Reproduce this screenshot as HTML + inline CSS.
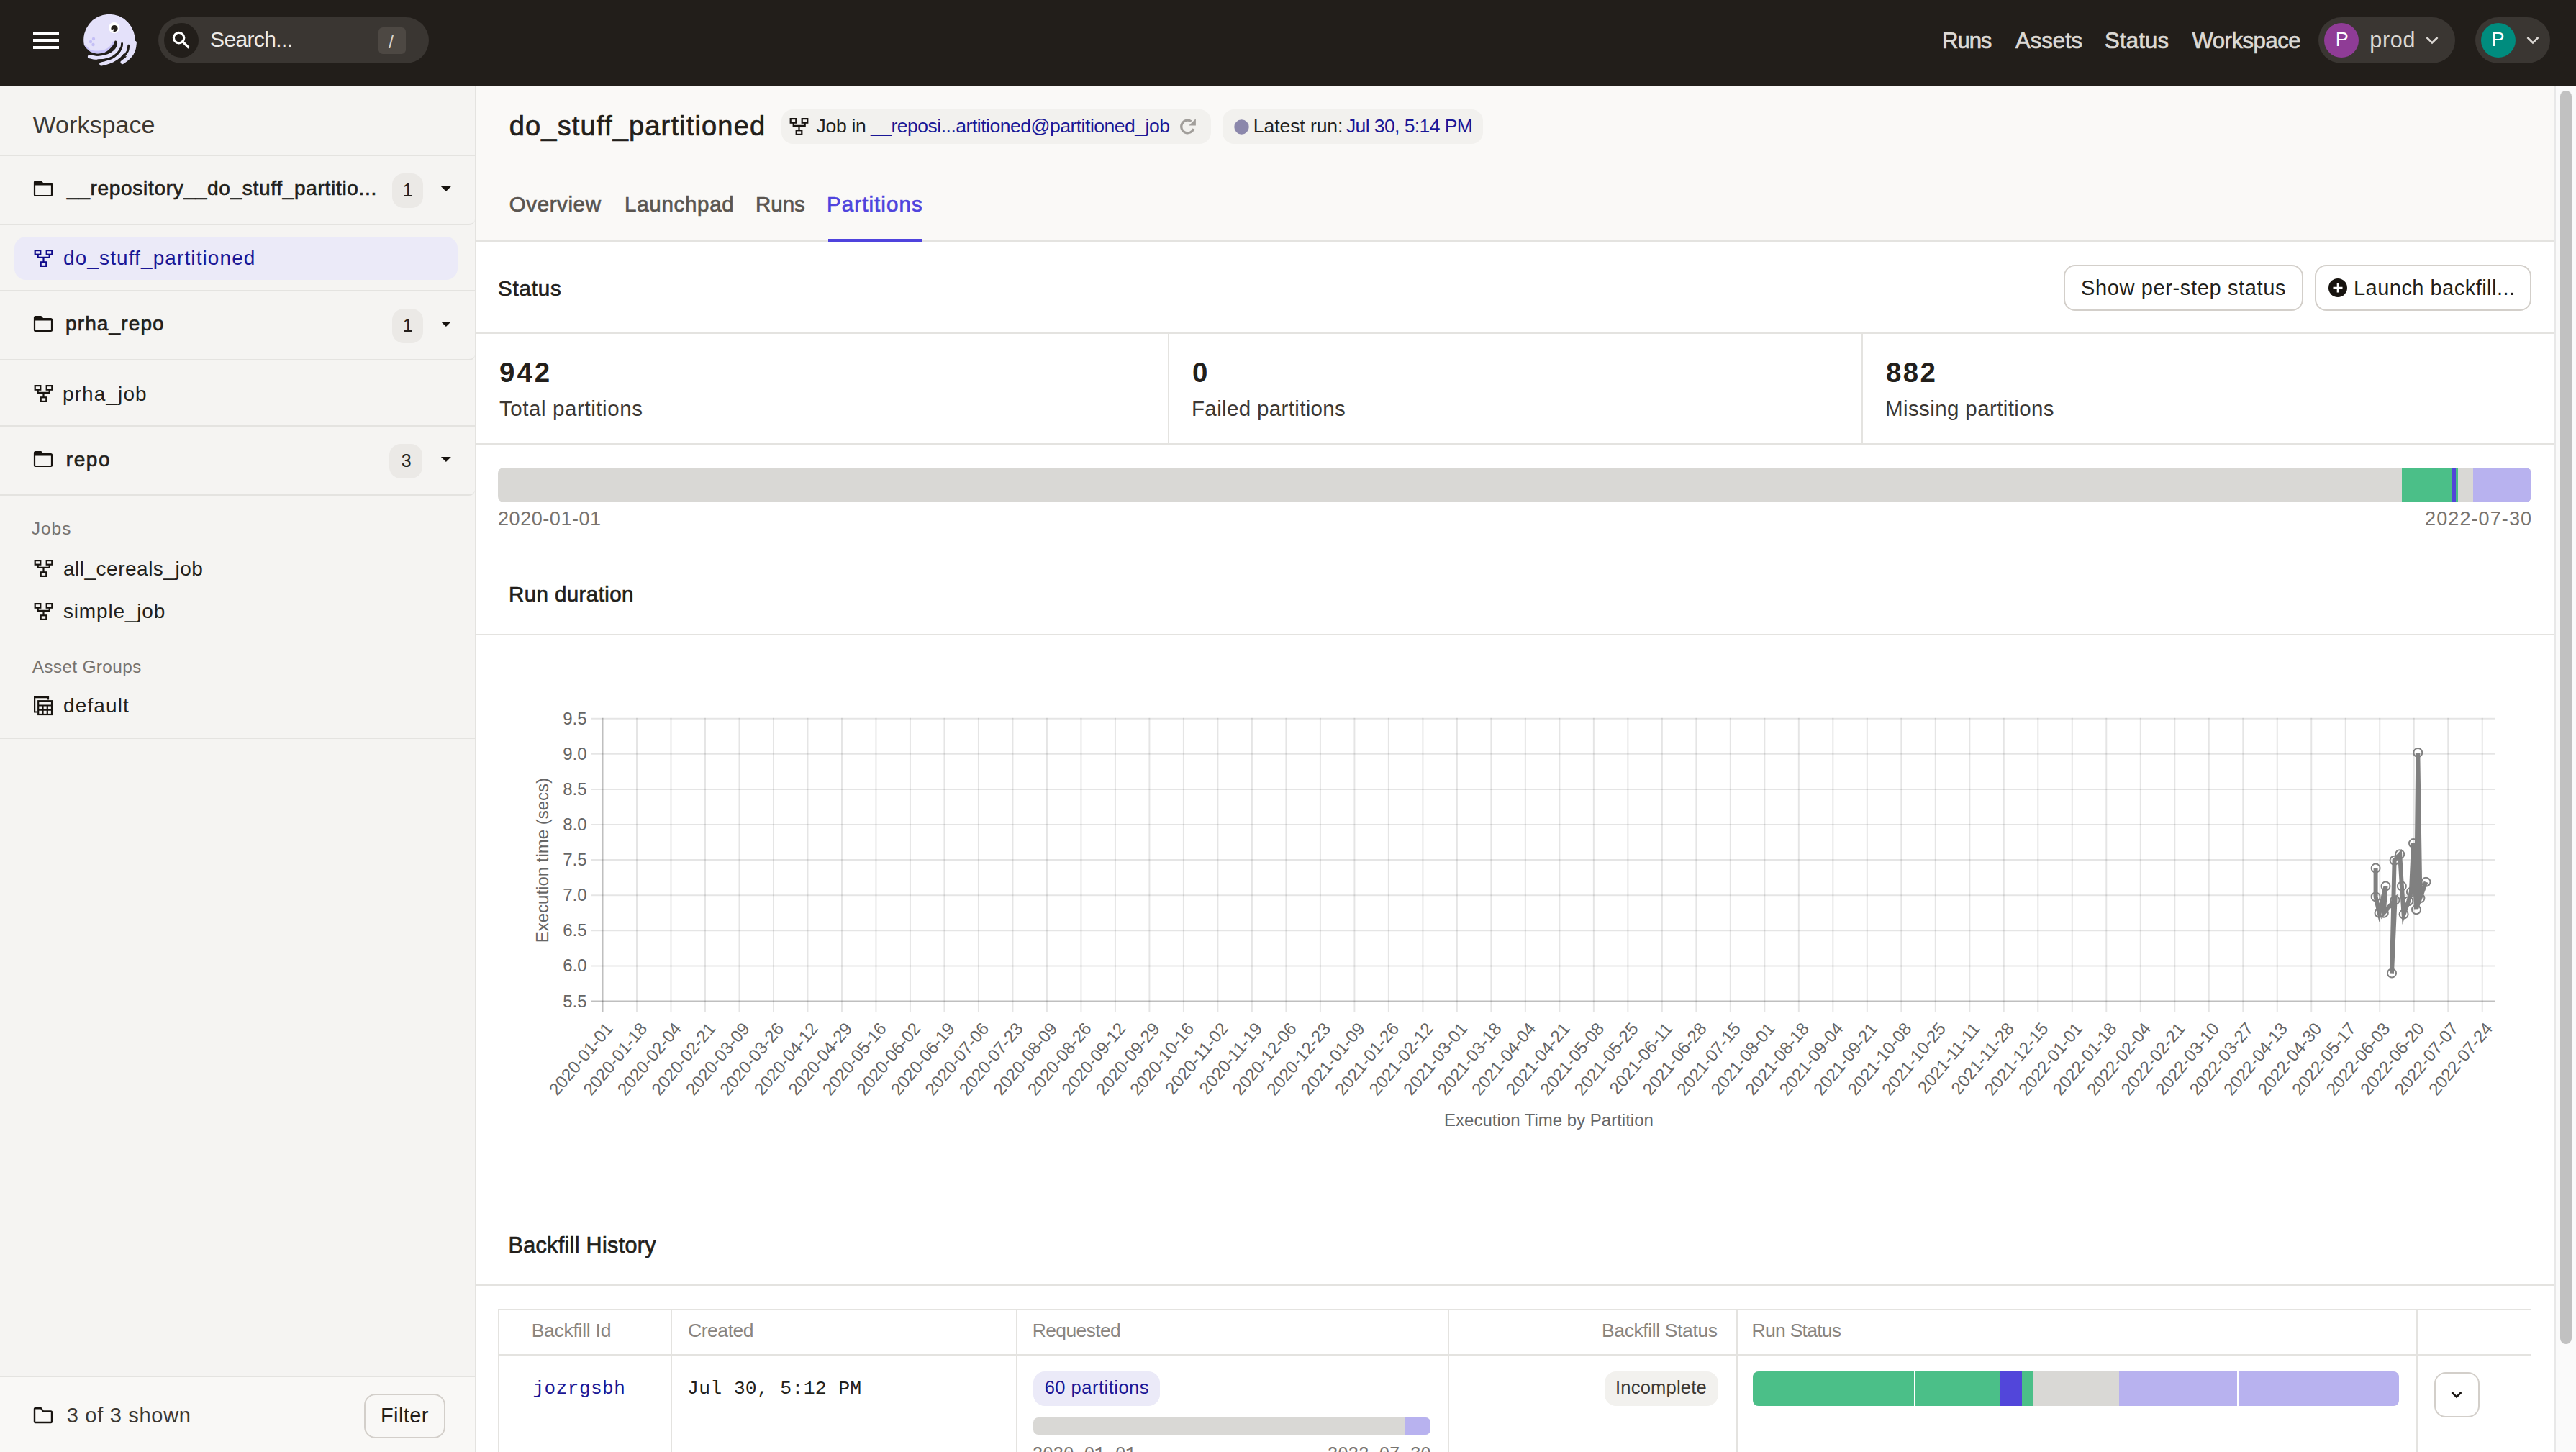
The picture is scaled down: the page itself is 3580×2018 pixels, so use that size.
<!DOCTYPE html><html><head><meta charset="utf-8"><style>
html,body{margin:0;padding:0;width:3580px;height:2018px;overflow:hidden;background:#fff;}
.r,.t,.s{position:absolute;}
.t{white-space:nowrap;}
</style></head><body>
<div class="r" style="left:0px;top:0px;width:3580px;height:120px;background:#221E1A;border-radius:0px;"></div>
<div class="r" style="left:46px;top:44px;width:36px;height:4px;background:#FFFFFF;border-radius:0px;"></div>
<div class="r" style="left:46px;top:54px;width:36px;height:4px;background:#FFFFFF;border-radius:0px;"></div>
<div class="r" style="left:46px;top:64px;width:36px;height:4px;background:#FFFFFF;border-radius:0px;"></div>
<div class="r" style="left:220px;top:24px;width:376px;height:64px;background:#3A3632;border-radius:32px;"></div>
<div class="r" style="left:228px;top:32px;width:48px;height:48px;background:#221E1A;border-radius:24px;"></div>
<div class="r" style="left:526px;top:38px;width:38px;height:37px;background:#4D4843;border-radius:6px;"></div>
<div class="r" style="left:3222px;top:24px;width:190px;height:64px;background:#3A3632;border-radius:32px;"></div>
<div class="r" style="left:3230px;top:32px;width:48px;height:48px;background:#8F3C96;border-radius:24px;"></div>
<div class="r" style="left:3440px;top:24px;width:104px;height:64px;background:#3A3632;border-radius:32px;"></div>
<div class="r" style="left:3448px;top:32px;width:48px;height:48px;background:#008C7E;border-radius:24px;"></div>
<div class="r" style="left:0px;top:120px;width:660px;height:1898px;background:#F5F4F2;border-radius:0px;"></div>
<div class="r" style="left:660px;top:120px;width:2px;height:1898px;background:#E4E3E0;border-radius:0px;"></div>
<div class="r" style="left:0px;top:215px;width:660px;height:2px;background:#E4E3E0;border-radius:0px;"></div>
<div class="r" style="left:545px;top:241px;width:43px;height:48px;background:#EBE9E6;border-radius:16px;"></div>
<div class="r" style="left:0px;top:216px;width:660px;height:97px;background:transparent;border-radius:0px;border-bottom:2px solid #E4E3E0;border-bottom-right-radius:8px;box-sizing:border-box"></div>
<div class="r" style="left:20px;top:329px;width:616px;height:60px;background:#EBEAF8;border-radius:16px;"></div>
<div class="r" style="left:0px;top:403px;width:660px;height:2px;background:#E4E3E0;border-radius:0px;"></div>
<div class="r" style="left:545px;top:429px;width:43px;height:48px;background:#EBE9E6;border-radius:16px;"></div>
<div class="r" style="left:0px;top:404px;width:660px;height:97px;background:transparent;border-radius:0px;border-bottom:2px solid #E4E3E0;border-bottom-right-radius:8px;box-sizing:border-box"></div>
<div class="r" style="left:0px;top:591px;width:660px;height:2px;background:#E4E3E0;border-radius:0px;"></div>
<div class="r" style="left:541px;top:617px;width:46px;height:48px;background:#EBE9E6;border-radius:16px;"></div>
<div class="r" style="left:0px;top:592px;width:660px;height:96.5px;background:transparent;border-radius:0px;border-bottom:2px solid #E4E3E0;border-bottom-right-radius:8px;box-sizing:border-box"></div>
<div class="r" style="left:0px;top:1025px;width:660px;height:2px;background:#E4E3E0;border-radius:0px;"></div>
<div class="r" style="left:0px;top:1912px;width:660px;height:106px;background:#F9F8F6;border-radius:0px;"></div>
<div class="r" style="left:0px;top:1912px;width:660px;height:2px;background:#E4E3E0;border-radius:0px;"></div>
<div class="r" style="left:506px;top:1937px;width:113px;height:62px;background:transparent;border-radius:16px;border:2px solid #D3CFCA;box-sizing:border-box"></div>
<div class="r" style="left:662px;top:120px;width:2888px;height:214px;background:#FAF9F7;border-radius:0px;"></div>
<div class="r" style="left:662px;top:333.5px;width:2888px;height:2px;background:#E4E3E0;border-radius:0px;"></div>
<div class="r" style="left:1086px;top:152px;width:597px;height:48px;background:#F2F1EE;border-radius:16px;"></div>
<div class="r" style="left:1699px;top:152px;width:362px;height:48px;background:#F2F1EE;border-radius:16px;"></div>
<div class="r" style="left:1151px;top:331.5px;width:131px;height:4px;background:#4F43DD;border-radius:0px;"></div>
<div class="r" style="left:662px;top:335.5px;width:2888px;height:1682.5px;background:#FFFFFF;border-radius:0px;"></div>
<div class="r" style="left:2868px;top:368px;width:333px;height:64px;background:transparent;border-radius:16px;border:2px solid #D3CFCA;box-sizing:border-box"></div>
<div class="r" style="left:3217px;top:368px;width:301px;height:64px;background:transparent;border-radius:16px;border:2px solid #D3CFCA;box-sizing:border-box"></div>
<div class="r" style="left:662px;top:462px;width:2888px;height:2px;background:#E4E3E0;border-radius:0px;"></div>
<div class="r" style="left:1623px;top:463px;width:2px;height:154px;background:#E4E3E0;border-radius:0px;"></div>
<div class="r" style="left:2587px;top:463px;width:2px;height:154px;background:#E4E3E0;border-radius:0px;"></div>
<div class="r" style="left:662px;top:616px;width:2888px;height:2px;background:#E4E3E0;border-radius:0px;"></div>
<div class="r" style="left:662px;top:881px;width:2888px;height:2px;background:#E4E3E0;border-radius:0px;"></div>
<div class="r" style="left:662px;top:1784.5px;width:2888px;height:2px;background:#E4E3E0;border-radius:0px;"></div>
<div class="r" style="left:692px;top:1819px;width:2826px;height:2px;background:#E4E3E0;border-radius:0px;"></div>
<div class="r" style="left:692px;top:1819px;width:2px;height:199px;background:#E4E3E0;border-radius:0px;"></div>
<div class="r" style="left:692px;top:1882px;width:2826px;height:2px;background:#E4E3E0;border-radius:0px;"></div>
<div class="r" style="left:932px;top:1819px;width:2px;height:199px;background:#E4E3E0;border-radius:0px;"></div>
<div class="r" style="left:1412px;top:1819px;width:2px;height:199px;background:#E4E3E0;border-radius:0px;"></div>
<div class="r" style="left:2012px;top:1819px;width:2px;height:199px;background:#E4E3E0;border-radius:0px;"></div>
<div class="r" style="left:2412.5px;top:1819px;width:2px;height:199px;background:#E4E3E0;border-radius:0px;"></div>
<div class="r" style="left:3358px;top:1819px;width:2px;height:199px;background:#E4E3E0;border-radius:0px;"></div>
<div class="r" style="left:1436px;top:1906px;width:175.5px;height:48px;background:#EBEAF8;border-radius:16px;"></div>
<div class="r" style="left:2230px;top:1906px;width:157.5px;height:48px;background:#F2F1EE;border-radius:16px;"></div>
<div class="r" style="left:3382.6px;top:1906.7px;width:63px;height:63px;background:transparent;border-radius:16px;border:2px solid #D3CFCA;box-sizing:border-box"></div>
<div class="r" style="left:3550px;top:120px;width:30px;height:1898px;background:#FAFAFA;border-radius:0px;"></div>
<div class="r" style="left:3550px;top:120px;width:1.5px;height:1898px;background:#E8E8E8;border-radius:0px;"></div>
<div class="r" style="left:3558px;top:126px;width:16px;height:1742px;background:#C1C1C1;border-radius:8px;"></div>
<svg class="s" style="left:228px;top:32px" width="48" height="48"><circle cx="20.6" cy="20.6" r="7.2" fill="none" stroke="#fff" stroke-width="3.2"/><line x1="26" y1="26" x2="34.5" y2="34.5" stroke="#fff" stroke-width="3.2"/></svg>
<svg class="s" style="left:3368px;top:46px" width="24" height="20"><polyline points="4.5,6 12,13.5 19.5,6" fill="none" stroke="#DCD9D5" stroke-width="2.6"/></svg>
<svg class="s" style="left:3508px;top:46px" width="24" height="20"><polyline points="4.5,6 12,13.5 19.5,6" fill="none" stroke="#DCD9D5" stroke-width="2.6"/></svg>
<svg class="s" style="left:110px;top:14px" width="86" height="86" viewBox="0 0 86 86">
<defs><pattern id="dots" width="2" height="2" patternUnits="userSpaceOnUse"><rect width="2" height="2" fill="#ECEAFC"/><rect x="0.6" y="0.6" width="0.8" height="0.8" fill="#BDB6F5"/></pattern>
<clipPath id="hcl"><path d="M6.8 48 A35.7 35.7 0 1 1 77.4 45 L75.5 55 L70.5 62.5 L65 64.5 L59 58 L53 46 L51.70 43.30 C51.43 43.93 51.32 45.37 50.10 47.10 C48.88 48.83 46.67 51.75 44.40 53.70 C42.13 55.65 39.40 57.63 36.50 58.80 C33.60 59.97 30.17 60.73 27.00 60.70 C23.83 60.67 20.03 59.62 17.50 58.60 C14.97 57.58 13.35 55.97 11.80 54.60 C10.25 53.23 9.03 51.50 8.20 50.40 C7.37 49.30 7.03 48.40 6.80 48.00 Z"/></clipPath></defs>
<path d="M6.8 48 A35.7 35.7 0 1 1 77.4 45 L75.5 55 L70.5 62.5 L65 64.5 L59 58 L53 46 L51.70 43.30 C51.43 43.93 51.32 45.37 50.10 47.10 C48.88 48.83 46.67 51.75 44.40 53.70 C42.13 55.65 39.40 57.63 36.50 58.80 C33.60 59.97 30.17 60.73 27.00 60.70 C23.83 60.67 20.03 59.62 17.50 58.60 C14.97 57.58 13.35 55.97 11.80 54.60 C10.25 53.23 9.03 51.50 8.20 50.40 C7.37 49.30 7.03 48.40 6.80 48.00 Z" fill="url(#dots)"/>
<path d="M6.00 50.00 C7.50 51.33 11.50 56.42 15.00 58.00 C18.50 59.58 23.33 59.58 27.00 59.50 C30.67 59.42 34.00 58.75 37.00 57.50 C40.00 56.25 42.92 54.08 45.00 52.00 C47.08 49.92 48.75 46.17 49.50 45.00" fill="none" stroke="#C2BBF6" stroke-width="6" opacity="0.8" clip-path="url(#hcl)"/>
<path d="M14.50 64.60 C15.42 64.80 17.92 65.57 20.00 65.80 C22.08 66.03 24.25 66.13 27.00 66.00 C29.75 65.87 33.33 65.83 36.50 65.00 C39.67 64.17 43.33 62.67 46.00 61.00 C48.67 59.33 50.92 57.08 52.50 55.00 C54.08 52.92 54.92 50.50 55.50 48.50 C56.08 46.50 55.92 43.92 56.00 43.00" fill="none" stroke="url(#dots)" stroke-width="5.2" stroke-linecap="round"/>
<path d="M30.80 75.00 C31.75 74.78 33.97 74.50 36.50 73.70 C39.03 72.90 42.83 71.83 46.00 70.20 C49.17 68.57 52.87 66.33 55.50 63.90 C58.13 61.47 60.32 58.13 61.80 55.60 C63.28 53.07 63.93 50.55 64.40 48.70 C64.87 46.85 64.57 45.20 64.60 44.50" fill="none" stroke="url(#dots)" stroke-width="5.2" stroke-linecap="round"/>
<path d="M60.30 72.40 C61.35 71.62 64.48 69.65 66.60 67.70 C68.72 65.75 71.42 63.08 73.00 60.70 C74.58 58.32 75.40 55.93 76.10 53.40 C76.80 50.87 77.02 46.82 77.20 45.50" fill="none" stroke="url(#dots)" stroke-width="5.4" stroke-linecap="round"/>
<path d="M23.80 62.30 C25.38 62.13 30.65 61.98 33.30 61.30 C35.95 60.62 37.58 59.67 39.70 58.20 C41.82 56.73 44.27 54.45 46.00 52.50 C47.73 50.55 49.33 47.93 50.10 46.50 C50.87 45.07 50.52 44.33 50.60 43.90" fill="none" stroke="#221E1A" stroke-width="3" stroke-linecap="round"/>
<path d="M26.00 70.00 C27.75 69.82 33.17 69.55 36.50 68.90 C39.83 68.25 43.10 67.62 46.00 66.10 C48.90 64.58 51.78 62.18 53.90 59.80 C56.02 57.42 57.75 54.02 58.70 51.80 C59.65 49.58 59.45 47.38 59.60 46.50" fill="none" stroke="#221E1A" stroke-width="3" stroke-linecap="round"/>
<path d="M57.40 69.30 C58.40 68.23 61.72 65.02 63.40 62.90 C65.08 60.78 66.60 58.87 67.50 56.60 C68.40 54.33 68.58 50.52 68.80 49.30" fill="none" stroke="#221E1A" stroke-width="3" stroke-linecap="round"/>
<circle cx="16" cy="44" r="2.2" fill="#BDB6F5" opacity="0.8"/><circle cx="20" cy="40" r="2.2" fill="#BDB6F5" opacity="0.8"/><circle cx="19.5" cy="48" r="2.2" fill="#BDB6F5" opacity="0.8"/>
<circle cx="48.6" cy="24.6" r="7.6" fill="#FFFFFF"/>
<circle cx="49" cy="25.6" r="4.6" fill="#231F1B"/><path d="M44.6 27.8 L48.2 26.2 L47.2 30.4 Z" fill="#FFFFFF"/>
</svg>

<svg class="s" style="left:46px;top:250px" width="28" height="24" viewBox="0 0 28 24"><path d="M2 4.2 V20.6 Q2 22 3.4 22 H24.6 Q26 22 26 20.6 V6.6 Q26 5.2 24.6 5.2 H13.6 L11 2.2 H3.4 Q2 2.2 2 3.6 Z" fill="none" stroke="#17130F" stroke-width="2.2" stroke-linejoin="round"/><path d="M2 3.6 Q2 2.2 3.4 2.2 H11 L13.6 5.2 H24.6 Q26 5.2 26 6.6 V7.6 H2 Z" fill="#17130F"/></svg>
<svg class="s" style="left:610px;top:256px" width="20" height="12"><polygon points="2.9,2.9 16.9,2.9 9.9,9.9" fill="#17130F"/></svg>
<svg class="s" style="left:47px;top:346px" width="28" height="26" viewBox="-0.6 -1 28 26"><g fill="none" stroke="#0F0A8A" stroke-width="2.2"><rect x="1.1" y="1.1" width="7.6" height="5.6"/><rect x="17.1" y="1.1" width="7.6" height="5.6"/><rect x="9.1" y="17.3" width="7.6" height="5.6"/><path d="M5.1 6.7 V10.9 H21.1 V6.7 M12.9 10.9 V17.3"/></g></svg>
<svg class="s" style="left:46px;top:438px" width="28" height="24" viewBox="0 0 28 24"><path d="M2 4.2 V20.6 Q2 22 3.4 22 H24.6 Q26 22 26 20.6 V6.6 Q26 5.2 24.6 5.2 H13.6 L11 2.2 H3.4 Q2 2.2 2 3.6 Z" fill="none" stroke="#17130F" stroke-width="2.2" stroke-linejoin="round"/><path d="M2 3.6 Q2 2.2 3.4 2.2 H11 L13.6 5.2 H24.6 Q26 5.2 26 6.6 V7.6 H2 Z" fill="#17130F"/></svg>
<svg class="s" style="left:610px;top:444px" width="20" height="12"><polygon points="2.9,2.9 16.9,2.9 9.9,9.9" fill="#17130F"/></svg>
<svg class="s" style="left:47px;top:534px" width="28" height="26" viewBox="-0.6 -1 28 26"><g fill="none" stroke="#17130F" stroke-width="2.2"><rect x="1.1" y="1.1" width="7.6" height="5.6"/><rect x="17.1" y="1.1" width="7.6" height="5.6"/><rect x="9.1" y="17.3" width="7.6" height="5.6"/><path d="M5.1 6.7 V10.9 H21.1 V6.7 M12.9 10.9 V17.3"/></g></svg>
<svg class="s" style="left:46px;top:626px" width="28" height="24" viewBox="0 0 28 24"><path d="M2 4.2 V20.6 Q2 22 3.4 22 H24.6 Q26 22 26 20.6 V6.6 Q26 5.2 24.6 5.2 H13.6 L11 2.2 H3.4 Q2 2.2 2 3.6 Z" fill="none" stroke="#17130F" stroke-width="2.2" stroke-linejoin="round"/><path d="M2 3.6 Q2 2.2 3.4 2.2 H11 L13.6 5.2 H24.6 Q26 5.2 26 6.6 V7.6 H2 Z" fill="#17130F"/></svg>
<svg class="s" style="left:610px;top:632px" width="20" height="12"><polygon points="2.9,2.9 16.9,2.9 9.9,9.9" fill="#17130F"/></svg>
<svg class="s" style="left:47px;top:777px" width="28" height="26" viewBox="-0.6 -1 28 26"><g fill="none" stroke="#17130F" stroke-width="2.2"><rect x="1.1" y="1.1" width="7.6" height="5.6"/><rect x="17.1" y="1.1" width="7.6" height="5.6"/><rect x="9.1" y="17.3" width="7.6" height="5.6"/><path d="M5.1 6.7 V10.9 H21.1 V6.7 M12.9 10.9 V17.3"/></g></svg>
<svg class="s" style="left:47px;top:837px" width="28" height="26" viewBox="-0.6 -1 28 26"><g fill="none" stroke="#17130F" stroke-width="2.2"><rect x="1.1" y="1.1" width="7.6" height="5.6"/><rect x="17.1" y="1.1" width="7.6" height="5.6"/><rect x="9.1" y="17.3" width="7.6" height="5.6"/><path d="M5.1 6.7 V10.9 H21.1 V6.7 M12.9 10.9 V17.3"/></g></svg>
<svg class="s" style="left:46px;top:967px" width="28" height="28" viewBox="0 0 28 28"><g fill="none" stroke="#17130F" stroke-width="2.2"><path d="M5.5 22.5 H2.1 V2.1 H21 V5.5"/><rect x="7.2" y="7.2" width="18.8" height="18.8"/><path d="M7.2 13.5 H26 M7.2 19.6 H26 M13.5 13.5 V26 M19.8 13.5 V26"/></g></svg>
<svg class="s" style="left:45px;top:1955px" width="30" height="24" viewBox="0 0 28 24"><path d="M2 3.4 V20.6 Q2 22 3.4 22 H24.6 Q26 22 26 20.6 V7.8 Q26 6.4 24.6 6.4 H13.8 L11 2.2 H3.4 Q2 2.2 2 3.4 Z" fill="none" stroke="#17130F" stroke-width="2.4" stroke-linejoin="round"/></svg>
<svg class="s" style="left:1097px;top:163px" width="28" height="26" viewBox="-0.6 -1 28 26"><g fill="none" stroke="#17130F" stroke-width="2.2"><rect x="1.1" y="1.1" width="7.6" height="5.6"/><rect x="17.1" y="1.1" width="7.6" height="5.6"/><rect x="9.1" y="17.3" width="7.6" height="5.6"/><path d="M5.1 6.7 V10.9 H21.1 V6.7 M12.9 10.9 V17.3"/></g></svg>
<svg class="s" style="left:1638px;top:164px" width="26" height="26" viewBox="0 0 26 26"><path d="M20.77 15.01 A 8.8 8.8 0 1 1 17.55 4.79" fill="none" stroke="#A19E9A" stroke-width="3.2"/><polygon points="14.4,10.6 23.9,1 23.9,10.6" fill="#A19E9A"/></svg>
<svg class="s" style="left:1714.5px;top:165.8px" width="21" height="21"><defs><pattern id="dp" width="2" height="2" patternUnits="userSpaceOnUse"><rect width="2" height="2" fill="#9C9A99"/><rect x="0.5" y="0.5" width="1" height="1" fill="#5A4FE0"/></pattern></defs><circle cx="10.5" cy="10.5" r="10.2" fill="url(#dp)"/></svg>
<svg class="s" style="left:3235px;top:386px" width="28" height="28" viewBox="0 0 28 28"><circle cx="14" cy="14" r="13" fill="#17130F"/><path d="M14 7.5 V20.5 M7.5 14 H20.5" stroke="#fff" stroke-width="2.6"/></svg>
<div class="r" style="left:692px;top:650px;width:2826px;height:48px;border-radius:8px;overflow:hidden;background:#D9D8D5">
<div class="r" style="left:2646px;top:0;width:69px;height:48px;background:#4BBF88"></div>
<div class="r" style="left:2715px;top:0;width:6px;height:48px;background:#5246D9"></div>
<div class="r" style="left:2721px;top:0;width:3px;height:48px;background:#4BBF88"></div>
<div class="r" style="left:2745px;top:0;width:81px;height:48px;background:#B8B2EF"></div>
</div>
<svg class="s" style="left:0;top:0" width="3580" height="2018">
<line x1="822" y1="1391.50" x2="3467.5" y2="1391.50" stroke="rgba(0,0,0,0.25)" stroke-width="2"/>
<text x="815.5" y="1399.50" text-anchor="end" font-family="Liberation Sans" font-size="24" fill="#666">5.5</text>
<line x1="822" y1="1342.41" x2="3467.5" y2="1342.41" stroke="rgba(0,0,0,0.1)" stroke-width="2"/>
<text x="815.5" y="1350.41" text-anchor="end" font-family="Liberation Sans" font-size="24" fill="#666">6.0</text>
<line x1="822" y1="1293.31" x2="3467.5" y2="1293.31" stroke="rgba(0,0,0,0.1)" stroke-width="2"/>
<text x="815.5" y="1301.31" text-anchor="end" font-family="Liberation Sans" font-size="24" fill="#666">6.5</text>
<line x1="822" y1="1244.22" x2="3467.5" y2="1244.22" stroke="rgba(0,0,0,0.1)" stroke-width="2"/>
<text x="815.5" y="1252.22" text-anchor="end" font-family="Liberation Sans" font-size="24" fill="#666">7.0</text>
<line x1="822" y1="1195.12" x2="3467.5" y2="1195.12" stroke="rgba(0,0,0,0.1)" stroke-width="2"/>
<text x="815.5" y="1203.12" text-anchor="end" font-family="Liberation Sans" font-size="24" fill="#666">7.5</text>
<line x1="822" y1="1146.03" x2="3467.5" y2="1146.03" stroke="rgba(0,0,0,0.1)" stroke-width="2"/>
<text x="815.5" y="1154.03" text-anchor="end" font-family="Liberation Sans" font-size="24" fill="#666">8.0</text>
<line x1="822" y1="1096.94" x2="3467.5" y2="1096.94" stroke="rgba(0,0,0,0.1)" stroke-width="2"/>
<text x="815.5" y="1104.94" text-anchor="end" font-family="Liberation Sans" font-size="24" fill="#666">8.5</text>
<line x1="822" y1="1047.84" x2="3467.5" y2="1047.84" stroke="rgba(0,0,0,0.1)" stroke-width="2"/>
<text x="815.5" y="1055.84" text-anchor="end" font-family="Liberation Sans" font-size="24" fill="#666">9.0</text>
<line x1="822" y1="998.75" x2="3467.5" y2="998.75" stroke="rgba(0,0,0,0.1)" stroke-width="2"/>
<text x="815.5" y="1006.75" text-anchor="end" font-family="Liberation Sans" font-size="24" fill="#666">9.5</text>
<line x1="837.50" y1="997.75" x2="837.50" y2="1407" stroke="rgba(0,0,0,0.25)" stroke-width="2"/>
<line x1="885.00" y1="997.75" x2="885.00" y2="1407" stroke="rgba(0,0,0,0.1)" stroke-width="2"/>
<line x1="932.49" y1="997.75" x2="932.49" y2="1407" stroke="rgba(0,0,0,0.1)" stroke-width="2"/>
<line x1="979.99" y1="997.75" x2="979.99" y2="1407" stroke="rgba(0,0,0,0.1)" stroke-width="2"/>
<line x1="1027.48" y1="997.75" x2="1027.48" y2="1407" stroke="rgba(0,0,0,0.1)" stroke-width="2"/>
<line x1="1074.98" y1="997.75" x2="1074.98" y2="1407" stroke="rgba(0,0,0,0.1)" stroke-width="2"/>
<line x1="1122.47" y1="997.75" x2="1122.47" y2="1407" stroke="rgba(0,0,0,0.1)" stroke-width="2"/>
<line x1="1169.97" y1="997.75" x2="1169.97" y2="1407" stroke="rgba(0,0,0,0.1)" stroke-width="2"/>
<line x1="1217.46" y1="997.75" x2="1217.46" y2="1407" stroke="rgba(0,0,0,0.1)" stroke-width="2"/>
<line x1="1264.96" y1="997.75" x2="1264.96" y2="1407" stroke="rgba(0,0,0,0.1)" stroke-width="2"/>
<line x1="1312.45" y1="997.75" x2="1312.45" y2="1407" stroke="rgba(0,0,0,0.1)" stroke-width="2"/>
<line x1="1359.95" y1="997.75" x2="1359.95" y2="1407" stroke="rgba(0,0,0,0.1)" stroke-width="2"/>
<line x1="1407.44" y1="997.75" x2="1407.44" y2="1407" stroke="rgba(0,0,0,0.1)" stroke-width="2"/>
<line x1="1454.94" y1="997.75" x2="1454.94" y2="1407" stroke="rgba(0,0,0,0.1)" stroke-width="2"/>
<line x1="1502.43" y1="997.75" x2="1502.43" y2="1407" stroke="rgba(0,0,0,0.1)" stroke-width="2"/>
<line x1="1549.93" y1="997.75" x2="1549.93" y2="1407" stroke="rgba(0,0,0,0.1)" stroke-width="2"/>
<line x1="1597.42" y1="997.75" x2="1597.42" y2="1407" stroke="rgba(0,0,0,0.1)" stroke-width="2"/>
<line x1="1644.92" y1="997.75" x2="1644.92" y2="1407" stroke="rgba(0,0,0,0.1)" stroke-width="2"/>
<line x1="1692.41" y1="997.75" x2="1692.41" y2="1407" stroke="rgba(0,0,0,0.1)" stroke-width="2"/>
<line x1="1739.91" y1="997.75" x2="1739.91" y2="1407" stroke="rgba(0,0,0,0.1)" stroke-width="2"/>
<line x1="1787.40" y1="997.75" x2="1787.40" y2="1407" stroke="rgba(0,0,0,0.1)" stroke-width="2"/>
<line x1="1834.90" y1="997.75" x2="1834.90" y2="1407" stroke="rgba(0,0,0,0.1)" stroke-width="2"/>
<line x1="1882.39" y1="997.75" x2="1882.39" y2="1407" stroke="rgba(0,0,0,0.1)" stroke-width="2"/>
<line x1="1929.89" y1="997.75" x2="1929.89" y2="1407" stroke="rgba(0,0,0,0.1)" stroke-width="2"/>
<line x1="1977.39" y1="997.75" x2="1977.39" y2="1407" stroke="rgba(0,0,0,0.1)" stroke-width="2"/>
<line x1="2024.88" y1="997.75" x2="2024.88" y2="1407" stroke="rgba(0,0,0,0.1)" stroke-width="2"/>
<line x1="2072.38" y1="997.75" x2="2072.38" y2="1407" stroke="rgba(0,0,0,0.1)" stroke-width="2"/>
<line x1="2119.87" y1="997.75" x2="2119.87" y2="1407" stroke="rgba(0,0,0,0.1)" stroke-width="2"/>
<line x1="2167.37" y1="997.75" x2="2167.37" y2="1407" stroke="rgba(0,0,0,0.1)" stroke-width="2"/>
<line x1="2214.86" y1="997.75" x2="2214.86" y2="1407" stroke="rgba(0,0,0,0.1)" stroke-width="2"/>
<line x1="2262.36" y1="997.75" x2="2262.36" y2="1407" stroke="rgba(0,0,0,0.1)" stroke-width="2"/>
<line x1="2309.85" y1="997.75" x2="2309.85" y2="1407" stroke="rgba(0,0,0,0.1)" stroke-width="2"/>
<line x1="2357.35" y1="997.75" x2="2357.35" y2="1407" stroke="rgba(0,0,0,0.1)" stroke-width="2"/>
<line x1="2404.84" y1="997.75" x2="2404.84" y2="1407" stroke="rgba(0,0,0,0.1)" stroke-width="2"/>
<line x1="2452.34" y1="997.75" x2="2452.34" y2="1407" stroke="rgba(0,0,0,0.1)" stroke-width="2"/>
<line x1="2499.83" y1="997.75" x2="2499.83" y2="1407" stroke="rgba(0,0,0,0.1)" stroke-width="2"/>
<line x1="2547.33" y1="997.75" x2="2547.33" y2="1407" stroke="rgba(0,0,0,0.1)" stroke-width="2"/>
<line x1="2594.82" y1="997.75" x2="2594.82" y2="1407" stroke="rgba(0,0,0,0.1)" stroke-width="2"/>
<line x1="2642.32" y1="997.75" x2="2642.32" y2="1407" stroke="rgba(0,0,0,0.1)" stroke-width="2"/>
<line x1="2689.81" y1="997.75" x2="2689.81" y2="1407" stroke="rgba(0,0,0,0.1)" stroke-width="2"/>
<line x1="2737.31" y1="997.75" x2="2737.31" y2="1407" stroke="rgba(0,0,0,0.1)" stroke-width="2"/>
<line x1="2784.80" y1="997.75" x2="2784.80" y2="1407" stroke="rgba(0,0,0,0.1)" stroke-width="2"/>
<line x1="2832.30" y1="997.75" x2="2832.30" y2="1407" stroke="rgba(0,0,0,0.1)" stroke-width="2"/>
<line x1="2879.79" y1="997.75" x2="2879.79" y2="1407" stroke="rgba(0,0,0,0.1)" stroke-width="2"/>
<line x1="2927.29" y1="997.75" x2="2927.29" y2="1407" stroke="rgba(0,0,0,0.1)" stroke-width="2"/>
<line x1="2974.78" y1="997.75" x2="2974.78" y2="1407" stroke="rgba(0,0,0,0.1)" stroke-width="2"/>
<line x1="3022.28" y1="997.75" x2="3022.28" y2="1407" stroke="rgba(0,0,0,0.1)" stroke-width="2"/>
<line x1="3069.78" y1="997.75" x2="3069.78" y2="1407" stroke="rgba(0,0,0,0.1)" stroke-width="2"/>
<line x1="3117.27" y1="997.75" x2="3117.27" y2="1407" stroke="rgba(0,0,0,0.1)" stroke-width="2"/>
<line x1="3164.77" y1="997.75" x2="3164.77" y2="1407" stroke="rgba(0,0,0,0.1)" stroke-width="2"/>
<line x1="3212.26" y1="997.75" x2="3212.26" y2="1407" stroke="rgba(0,0,0,0.1)" stroke-width="2"/>
<line x1="3259.76" y1="997.75" x2="3259.76" y2="1407" stroke="rgba(0,0,0,0.1)" stroke-width="2"/>
<line x1="3307.25" y1="997.75" x2="3307.25" y2="1407" stroke="rgba(0,0,0,0.1)" stroke-width="2"/>
<line x1="3354.75" y1="997.75" x2="3354.75" y2="1407" stroke="rgba(0,0,0,0.1)" stroke-width="2"/>
<line x1="3402.24" y1="997.75" x2="3402.24" y2="1407" stroke="rgba(0,0,0,0.1)" stroke-width="2"/>
<line x1="3449.74" y1="997.75" x2="3449.74" y2="1407" stroke="rgba(0,0,0,0.1)" stroke-width="2"/>
<text transform="translate(848.25,1426) rotate(-50)" text-anchor="end" dominant-baseline="middle" font-family="Liberation Sans" font-size="24" fill="#666">2020-01-01</text>
<text transform="translate(895.75,1426) rotate(-50)" text-anchor="end" dominant-baseline="middle" font-family="Liberation Sans" font-size="24" fill="#666">2020-01-18</text>
<text transform="translate(943.24,1426) rotate(-50)" text-anchor="end" dominant-baseline="middle" font-family="Liberation Sans" font-size="24" fill="#666">2020-02-04</text>
<text transform="translate(990.74,1426) rotate(-50)" text-anchor="end" dominant-baseline="middle" font-family="Liberation Sans" font-size="24" fill="#666">2020-02-21</text>
<text transform="translate(1038.23,1426) rotate(-50)" text-anchor="end" dominant-baseline="middle" font-family="Liberation Sans" font-size="24" fill="#666">2020-03-09</text>
<text transform="translate(1085.73,1426) rotate(-50)" text-anchor="end" dominant-baseline="middle" font-family="Liberation Sans" font-size="24" fill="#666">2020-03-26</text>
<text transform="translate(1133.22,1426) rotate(-50)" text-anchor="end" dominant-baseline="middle" font-family="Liberation Sans" font-size="24" fill="#666">2020-04-12</text>
<text transform="translate(1180.72,1426) rotate(-50)" text-anchor="end" dominant-baseline="middle" font-family="Liberation Sans" font-size="24" fill="#666">2020-04-29</text>
<text transform="translate(1228.21,1426) rotate(-50)" text-anchor="end" dominant-baseline="middle" font-family="Liberation Sans" font-size="24" fill="#666">2020-05-16</text>
<text transform="translate(1275.71,1426) rotate(-50)" text-anchor="end" dominant-baseline="middle" font-family="Liberation Sans" font-size="24" fill="#666">2020-06-02</text>
<text transform="translate(1323.20,1426) rotate(-50)" text-anchor="end" dominant-baseline="middle" font-family="Liberation Sans" font-size="24" fill="#666">2020-06-19</text>
<text transform="translate(1370.70,1426) rotate(-50)" text-anchor="end" dominant-baseline="middle" font-family="Liberation Sans" font-size="24" fill="#666">2020-07-06</text>
<text transform="translate(1418.19,1426) rotate(-50)" text-anchor="end" dominant-baseline="middle" font-family="Liberation Sans" font-size="24" fill="#666">2020-07-23</text>
<text transform="translate(1465.69,1426) rotate(-50)" text-anchor="end" dominant-baseline="middle" font-family="Liberation Sans" font-size="24" fill="#666">2020-08-09</text>
<text transform="translate(1513.18,1426) rotate(-50)" text-anchor="end" dominant-baseline="middle" font-family="Liberation Sans" font-size="24" fill="#666">2020-08-26</text>
<text transform="translate(1560.68,1426) rotate(-50)" text-anchor="end" dominant-baseline="middle" font-family="Liberation Sans" font-size="24" fill="#666">2020-09-12</text>
<text transform="translate(1608.17,1426) rotate(-50)" text-anchor="end" dominant-baseline="middle" font-family="Liberation Sans" font-size="24" fill="#666">2020-09-29</text>
<text transform="translate(1655.67,1426) rotate(-50)" text-anchor="end" dominant-baseline="middle" font-family="Liberation Sans" font-size="24" fill="#666">2020-10-16</text>
<text transform="translate(1703.16,1426) rotate(-50)" text-anchor="end" dominant-baseline="middle" font-family="Liberation Sans" font-size="24" fill="#666">2020-11-02</text>
<text transform="translate(1750.66,1426) rotate(-50)" text-anchor="end" dominant-baseline="middle" font-family="Liberation Sans" font-size="24" fill="#666">2020-11-19</text>
<text transform="translate(1798.15,1426) rotate(-50)" text-anchor="end" dominant-baseline="middle" font-family="Liberation Sans" font-size="24" fill="#666">2020-12-06</text>
<text transform="translate(1845.65,1426) rotate(-50)" text-anchor="end" dominant-baseline="middle" font-family="Liberation Sans" font-size="24" fill="#666">2020-12-23</text>
<text transform="translate(1893.14,1426) rotate(-50)" text-anchor="end" dominant-baseline="middle" font-family="Liberation Sans" font-size="24" fill="#666">2021-01-09</text>
<text transform="translate(1940.64,1426) rotate(-50)" text-anchor="end" dominant-baseline="middle" font-family="Liberation Sans" font-size="24" fill="#666">2021-01-26</text>
<text transform="translate(1988.14,1426) rotate(-50)" text-anchor="end" dominant-baseline="middle" font-family="Liberation Sans" font-size="24" fill="#666">2021-02-12</text>
<text transform="translate(2035.63,1426) rotate(-50)" text-anchor="end" dominant-baseline="middle" font-family="Liberation Sans" font-size="24" fill="#666">2021-03-01</text>
<text transform="translate(2083.13,1426) rotate(-50)" text-anchor="end" dominant-baseline="middle" font-family="Liberation Sans" font-size="24" fill="#666">2021-03-18</text>
<text transform="translate(2130.62,1426) rotate(-50)" text-anchor="end" dominant-baseline="middle" font-family="Liberation Sans" font-size="24" fill="#666">2021-04-04</text>
<text transform="translate(2178.12,1426) rotate(-50)" text-anchor="end" dominant-baseline="middle" font-family="Liberation Sans" font-size="24" fill="#666">2021-04-21</text>
<text transform="translate(2225.61,1426) rotate(-50)" text-anchor="end" dominant-baseline="middle" font-family="Liberation Sans" font-size="24" fill="#666">2021-05-08</text>
<text transform="translate(2273.11,1426) rotate(-50)" text-anchor="end" dominant-baseline="middle" font-family="Liberation Sans" font-size="24" fill="#666">2021-05-25</text>
<text transform="translate(2320.60,1426) rotate(-50)" text-anchor="end" dominant-baseline="middle" font-family="Liberation Sans" font-size="24" fill="#666">2021-06-11</text>
<text transform="translate(2368.10,1426) rotate(-50)" text-anchor="end" dominant-baseline="middle" font-family="Liberation Sans" font-size="24" fill="#666">2021-06-28</text>
<text transform="translate(2415.59,1426) rotate(-50)" text-anchor="end" dominant-baseline="middle" font-family="Liberation Sans" font-size="24" fill="#666">2021-07-15</text>
<text transform="translate(2463.09,1426) rotate(-50)" text-anchor="end" dominant-baseline="middle" font-family="Liberation Sans" font-size="24" fill="#666">2021-08-01</text>
<text transform="translate(2510.58,1426) rotate(-50)" text-anchor="end" dominant-baseline="middle" font-family="Liberation Sans" font-size="24" fill="#666">2021-08-18</text>
<text transform="translate(2558.08,1426) rotate(-50)" text-anchor="end" dominant-baseline="middle" font-family="Liberation Sans" font-size="24" fill="#666">2021-09-04</text>
<text transform="translate(2605.57,1426) rotate(-50)" text-anchor="end" dominant-baseline="middle" font-family="Liberation Sans" font-size="24" fill="#666">2021-09-21</text>
<text transform="translate(2653.07,1426) rotate(-50)" text-anchor="end" dominant-baseline="middle" font-family="Liberation Sans" font-size="24" fill="#666">2021-10-08</text>
<text transform="translate(2700.56,1426) rotate(-50)" text-anchor="end" dominant-baseline="middle" font-family="Liberation Sans" font-size="24" fill="#666">2021-10-25</text>
<text transform="translate(2748.06,1426) rotate(-50)" text-anchor="end" dominant-baseline="middle" font-family="Liberation Sans" font-size="24" fill="#666">2021-11-11</text>
<text transform="translate(2795.55,1426) rotate(-50)" text-anchor="end" dominant-baseline="middle" font-family="Liberation Sans" font-size="24" fill="#666">2021-11-28</text>
<text transform="translate(2843.05,1426) rotate(-50)" text-anchor="end" dominant-baseline="middle" font-family="Liberation Sans" font-size="24" fill="#666">2021-12-15</text>
<text transform="translate(2890.54,1426) rotate(-50)" text-anchor="end" dominant-baseline="middle" font-family="Liberation Sans" font-size="24" fill="#666">2022-01-01</text>
<text transform="translate(2938.04,1426) rotate(-50)" text-anchor="end" dominant-baseline="middle" font-family="Liberation Sans" font-size="24" fill="#666">2022-01-18</text>
<text transform="translate(2985.53,1426) rotate(-50)" text-anchor="end" dominant-baseline="middle" font-family="Liberation Sans" font-size="24" fill="#666">2022-02-04</text>
<text transform="translate(3033.03,1426) rotate(-50)" text-anchor="end" dominant-baseline="middle" font-family="Liberation Sans" font-size="24" fill="#666">2022-02-21</text>
<text transform="translate(3080.53,1426) rotate(-50)" text-anchor="end" dominant-baseline="middle" font-family="Liberation Sans" font-size="24" fill="#666">2022-03-10</text>
<text transform="translate(3128.02,1426) rotate(-50)" text-anchor="end" dominant-baseline="middle" font-family="Liberation Sans" font-size="24" fill="#666">2022-03-27</text>
<text transform="translate(3175.52,1426) rotate(-50)" text-anchor="end" dominant-baseline="middle" font-family="Liberation Sans" font-size="24" fill="#666">2022-04-13</text>
<text transform="translate(3223.01,1426) rotate(-50)" text-anchor="end" dominant-baseline="middle" font-family="Liberation Sans" font-size="24" fill="#666">2022-04-30</text>
<text transform="translate(3270.51,1426) rotate(-50)" text-anchor="end" dominant-baseline="middle" font-family="Liberation Sans" font-size="24" fill="#666">2022-05-17</text>
<text transform="translate(3318.00,1426) rotate(-50)" text-anchor="end" dominant-baseline="middle" font-family="Liberation Sans" font-size="24" fill="#666">2022-06-03</text>
<text transform="translate(3365.50,1426) rotate(-50)" text-anchor="end" dominant-baseline="middle" font-family="Liberation Sans" font-size="24" fill="#666">2022-06-20</text>
<text transform="translate(3412.99,1426) rotate(-50)" text-anchor="end" dominant-baseline="middle" font-family="Liberation Sans" font-size="24" fill="#666">2022-07-07</text>
<text transform="translate(3460.49,1426) rotate(-50)" text-anchor="end" dominant-baseline="middle" font-family="Liberation Sans" font-size="24" fill="#666">2022-07-24</text>
<text transform="translate(762,1195.6) rotate(-90)" text-anchor="middle" font-family="Liberation Sans" font-size="24" fill="#666">Execution time (secs)</text>
<text x="2152.5" y="1564.5" text-anchor="middle" font-family="Liberation Sans" font-size="24" fill="#666">Execution Time by Partition</text>
<polyline points="3301.6,1206.6 3301.6,1246.4 3306.6,1268.8 3315.5,1231.6 3312.8,1268.8 3328.5,1250.9 3324.0,1352.5 3327.6,1195.8 3335.2,1187.3 3337.9,1231.6 3340.6,1270.6 3347.3,1252.2 3350.9,1239.7 3354.0,1172.1 3358.0,1264.3 3360.3,1046.0 3363.4,1248.2 3371.5,1225.8" fill="none" stroke="#808080" stroke-width="6" stroke-linejoin="miter" stroke-miterlimit="10"/>
<circle cx="3301.6" cy="1206.6" r="6" fill="none" stroke="#808080" stroke-width="2"/>
<circle cx="3301.6" cy="1246.4" r="6" fill="none" stroke="#808080" stroke-width="2"/>
<circle cx="3306.6" cy="1268.8" r="6" fill="none" stroke="#808080" stroke-width="2"/>
<circle cx="3315.5" cy="1231.6" r="6" fill="none" stroke="#808080" stroke-width="2"/>
<circle cx="3312.8" cy="1268.8" r="6" fill="none" stroke="#808080" stroke-width="2"/>
<circle cx="3328.5" cy="1250.9" r="6" fill="none" stroke="#808080" stroke-width="2"/>
<circle cx="3324" cy="1352.5" r="6" fill="none" stroke="#808080" stroke-width="2"/>
<circle cx="3327.6" cy="1195.8" r="6" fill="none" stroke="#808080" stroke-width="2"/>
<circle cx="3335.2" cy="1187.3" r="6" fill="none" stroke="#808080" stroke-width="2"/>
<circle cx="3337.9" cy="1231.6" r="6" fill="none" stroke="#808080" stroke-width="2"/>
<circle cx="3340.6" cy="1270.6" r="6" fill="none" stroke="#808080" stroke-width="2"/>
<circle cx="3347.3" cy="1252.2" r="6" fill="none" stroke="#808080" stroke-width="2"/>
<circle cx="3350.9" cy="1239.7" r="6" fill="none" stroke="#808080" stroke-width="2"/>
<circle cx="3354" cy="1172.1" r="6" fill="none" stroke="#808080" stroke-width="2"/>
<circle cx="3358" cy="1264.3" r="6" fill="none" stroke="#808080" stroke-width="2"/>
<circle cx="3360.3" cy="1046" r="6" fill="none" stroke="#808080" stroke-width="2"/>
<circle cx="3363.4" cy="1248.2" r="6" fill="none" stroke="#808080" stroke-width="2"/>
<circle cx="3371.5" cy="1225.8" r="6" fill="none" stroke="#808080" stroke-width="2"/>
</svg>
<div class="r" style="left:1436px;top:1970px;width:552px;height:23.5px;border-radius:7px;overflow:hidden;background:#D9D8D5"><div class="r" style="left:517px;top:0;width:35px;height:24px;background:#B8B2EF"></div></div>
<div class="r" style="left:2435.7px;top:1906px;width:898px;height:48px;border-radius:8px;overflow:hidden;background:#D9D8D5">
<div class="r" style="left:0;top:0;width:343.6px;height:48px;background:#4BBF88"></div>
<div class="r" style="left:224.3px;top:0;width:2px;height:48px;background:#FFFFFF"></div>
<div class="r" style="left:344.3px;top:0;width:30px;height:48px;background:#5246DA"></div>
<div class="r" style="left:374.3px;top:0;width:15px;height:48px;background:#4BBF88"></div>
<div class="r" style="left:509.3px;top:0;width:389px;height:48px;background:#B8B2EF"></div>
<div class="r" style="left:673.3px;top:0;width:2px;height:48px;background:#FFFFFF"></div>
</div>
<svg class="s" style="left:3402px;top:1926px" width="24" height="24"><polyline points="5.5,9 12,15.5 18.5,9" fill="none" stroke="#17130F" stroke-width="2.6"/></svg>
<div class="t" id="search" style="left:292.00px;top:39.50px;font-family:'Liberation Sans', sans-serif;font-size:30.00px;line-height:30.00px;font-weight:400;color:#EDEBE8;letter-spacing:-0.625px;">Search...</div>
<div class="t" id="slash" style="left:540.00px;top:44.90px;font-family:'Liberation Sans', sans-serif;font-size:26.00px;line-height:26.00px;font-weight:400;color:#D8D4CF;letter-spacing:0.000px;">/</div>
<div class="t" id="nav_runs" style="left:2699.00px;top:40.65px;font-family:'Liberation Sans', sans-serif;font-size:31.00px;line-height:31.00px;font-weight:400;color:#DCD9D5;-webkit-text-stroke:0.72px #DCD9D5;letter-spacing:-1.000px;">Runs</div>
<div class="t" id="nav_assets" style="left:2801.00px;top:40.65px;font-family:'Liberation Sans', sans-serif;font-size:31.00px;line-height:31.00px;font-weight:400;color:#DCD9D5;-webkit-text-stroke:0.72px #DCD9D5;letter-spacing:0.000px;">Assets</div>
<div class="t" id="nav_status" style="left:2925.00px;top:40.65px;font-family:'Liberation Sans', sans-serif;font-size:31.00px;line-height:31.00px;font-weight:400;color:#DCD9D5;-webkit-text-stroke:0.72px #DCD9D5;letter-spacing:0.200px;">Status</div>
<div class="t" id="nav_ws" style="left:3046.50px;top:40.65px;font-family:'Liberation Sans', sans-serif;font-size:31.00px;line-height:31.00px;font-weight:400;color:#DCD9D5;-webkit-text-stroke:0.72px #DCD9D5;letter-spacing:-0.438px;">Workspace</div>
<div class="t" id="p1" style="left:3245.80px;top:41.85px;font-family:'Liberation Sans', sans-serif;font-size:27.00px;line-height:27.00px;font-weight:400;color:#FFFFFF;letter-spacing:0.000px;">P</div>
<div class="t" id="prod" style="left:3293.30px;top:39.58px;font-family:'Liberation Sans', sans-serif;font-size:30.50px;line-height:30.50px;font-weight:400;color:#DCD9D5;letter-spacing:0.667px;">prod</div>
<div class="t" id="p2" style="left:3462.50px;top:41.85px;font-family:'Liberation Sans', sans-serif;font-size:27.00px;line-height:27.00px;font-weight:400;color:#FFFFFF;letter-spacing:0.000px;">P</div>
<div class="t" id="sb_ws" style="left:45.50px;top:155.80px;font-family:'Liberation Sans', sans-serif;font-size:34.00px;line-height:34.00px;font-weight:400;color:#3D3833;letter-spacing:0.062px;">Workspace</div>
<div class="t" id="sb_r1" style="left:93.00px;top:248.20px;font-family:'Liberation Sans', sans-serif;font-size:28.00px;line-height:28.00px;font-weight:400;color:#231F1B;-webkit-text-stroke:0.67px #231F1B;letter-spacing:0.697px;">__repository__do_stuff_partitio...</div>
<div class="t" id="sb_b1" style="left:559.80px;top:251.65px;font-family:'Liberation Sans', sans-serif;font-size:25.00px;line-height:25.00px;font-weight:400;color:#231F1B;letter-spacing:0.000px;">1</div>
<div class="t" id="sb_dsp" style="left:88.00px;top:345.20px;font-family:'Liberation Sans', sans-serif;font-size:28.00px;line-height:28.00px;font-weight:400;color:#1A1796;letter-spacing:1.105px;">do_stuff_partitioned</div>
<div class="t" id="sb_r2" style="left:91.00px;top:436.20px;font-family:'Liberation Sans', sans-serif;font-size:28.00px;line-height:28.00px;font-weight:400;color:#231F1B;-webkit-text-stroke:0.67px #231F1B;letter-spacing:1.125px;">prha_repo</div>
<div class="t" id="sb_b2" style="left:559.80px;top:439.65px;font-family:'Liberation Sans', sans-serif;font-size:25.00px;line-height:25.00px;font-weight:400;color:#231F1B;letter-spacing:0.000px;">1</div>
<div class="t" id="sb_prha" style="left:87.00px;top:533.80px;font-family:'Liberation Sans', sans-serif;font-size:28.00px;line-height:28.00px;font-weight:400;color:#231F1B;letter-spacing:1.100px;">prha_job</div>
<div class="t" id="sb_r3" style="left:91.80px;top:624.70px;font-family:'Liberation Sans', sans-serif;font-size:28.00px;line-height:28.00px;font-weight:400;color:#231F1B;-webkit-text-stroke:0.67px #231F1B;letter-spacing:1.567px;">repo</div>
<div class="t" id="sb_b3" style="left:557.70px;top:628.35px;font-family:'Liberation Sans', sans-serif;font-size:25.00px;line-height:25.00px;font-weight:400;color:#231F1B;letter-spacing:0.000px;">3</div>
<div class="t" id="sb_jobs" style="left:43.70px;top:723.17px;font-family:'Liberation Sans', sans-serif;font-size:24.50px;line-height:24.50px;font-weight:400;color:#78736E;letter-spacing:1.000px;">Jobs</div>
<div class="t" id="sb_acj" style="left:88.00px;top:776.60px;font-family:'Liberation Sans', sans-serif;font-size:28.00px;line-height:28.00px;font-weight:400;color:#231F1B;letter-spacing:0.500px;">all_cereals_job</div>
<div class="t" id="sb_sj" style="left:88.00px;top:836.20px;font-family:'Liberation Sans', sans-serif;font-size:28.00px;line-height:28.00px;font-weight:400;color:#231F1B;letter-spacing:0.822px;">simple_job</div>
<div class="t" id="sb_ag" style="left:44.70px;top:914.77px;font-family:'Liberation Sans', sans-serif;font-size:24.50px;line-height:24.50px;font-weight:400;color:#78736E;letter-spacing:0.291px;">Asset Groups</div>
<div class="t" id="sb_def" style="left:88.00px;top:967.20px;font-family:'Liberation Sans', sans-serif;font-size:28.00px;line-height:28.00px;font-weight:400;color:#231F1B;letter-spacing:1.133px;">default</div>
<div class="t" id="sb_shown" style="left:92.70px;top:1952.85px;font-family:'Liberation Sans', sans-serif;font-size:29.00px;line-height:29.00px;font-weight:400;color:#3D3833;letter-spacing:0.709px;">3 of 3 shown</div>
<div class="t" id="sb_filter" style="left:529.00px;top:1952.85px;font-family:'Liberation Sans', sans-serif;font-size:29.00px;line-height:29.00px;font-weight:400;color:#231F1B;letter-spacing:0.400px;">Filter</div>
<div class="t" id="h_title" style="left:707.75px;top:156.45px;font-family:'Liberation Sans', sans-serif;font-size:38.00px;line-height:38.00px;font-weight:400;color:#231F1B;-webkit-text-stroke:0.72px #231F1B;letter-spacing:1.171px;">do_stuff_partitioned</div>
<div class="t" id="h_jobin" style="left:1134.50px;top:161.97px;font-family:'Liberation Sans', sans-serif;font-size:26.50px;line-height:26.50px;font-weight:400;color:#231F1B;letter-spacing:-0.300px;">Job in</div>
<div class="t" id="h_link" style="left:1210.00px;top:161.97px;font-family:'Liberation Sans', sans-serif;font-size:26.50px;line-height:26.50px;font-weight:400;color:#1A1796;letter-spacing:-0.489px;">__reposi...artitioned@partitioned_job</div>
<div class="t" id="h_latest" style="left:1741.80px;top:161.97px;font-family:'Liberation Sans', sans-serif;font-size:26.50px;line-height:26.50px;font-weight:400;color:#231F1B;letter-spacing:-0.060px;">Latest run:</div>
<div class="t" id="h_latest_link" style="left:1870.90px;top:161.97px;font-family:'Liberation Sans', sans-serif;font-size:26.50px;line-height:26.50px;font-weight:400;color:#1A1796;letter-spacing:-0.586px;">Jul 30, 5:14 PM</div>
<div class="t" id="tab_ov" style="left:707.75px;top:268.68px;font-family:'Liberation Sans', sans-serif;font-size:29.50px;line-height:29.50px;font-weight:400;color:#5A5550;-webkit-text-stroke:0.71px #5A5550;letter-spacing:0.607px;">Overview</div>
<div class="t" id="tab_lp" style="left:868.00px;top:268.68px;font-family:'Liberation Sans', sans-serif;font-size:29.50px;line-height:29.50px;font-weight:400;color:#5A5550;-webkit-text-stroke:0.71px #5A5550;letter-spacing:0.719px;">Launchpad</div>
<div class="t" id="tab_runs" style="left:1050.00px;top:268.68px;font-family:'Liberation Sans', sans-serif;font-size:29.50px;line-height:29.50px;font-weight:400;color:#5A5550;-webkit-text-stroke:0.71px #5A5550;letter-spacing:0.000px;">Runs</div>
<div class="t" id="tab_parts" style="left:1149.00px;top:268.68px;font-family:'Liberation Sans', sans-serif;font-size:29.50px;line-height:29.50px;font-weight:400;color:#4F43DD;-webkit-text-stroke:0.71px #4F43DD;letter-spacing:1.083px;">Partitions</div>
<div class="t" id="st_status" style="left:692.00px;top:385.62px;font-family:'Liberation Sans', sans-serif;font-size:29.50px;line-height:29.50px;font-weight:400;color:#231F1B;-webkit-text-stroke:0.71px #231F1B;letter-spacing:0.800px;">Status</div>
<div class="t" id="st_showstep" style="left:2892.00px;top:386.05px;font-family:'Liberation Sans', sans-serif;font-size:29.00px;line-height:29.00px;font-weight:400;color:#231F1B;letter-spacing:0.632px;">Show per-step status</div>
<div class="t" id="st_launch" style="left:3271.00px;top:386.05px;font-family:'Liberation Sans', sans-serif;font-size:29.00px;line-height:29.00px;font-weight:400;color:#231F1B;letter-spacing:0.471px;">Launch backfill...</div>
<div class="t" id="st_942" style="left:694.00px;top:499.27px;font-family:'Liberation Sans', sans-serif;font-size:38.50px;line-height:38.50px;font-weight:700;color:#231F1B;letter-spacing:3.000px;">942</div>
<div class="t" id="st_total" style="left:694.00px;top:553.32px;font-family:'Liberation Sans', sans-serif;font-size:29.50px;line-height:29.50px;font-weight:400;color:#3D3833;letter-spacing:0.583px;">Total partitions</div>
<div class="t" id="st_0" style="left:1657.00px;top:499.27px;font-family:'Liberation Sans', sans-serif;font-size:38.50px;line-height:38.50px;font-weight:700;color:#231F1B;letter-spacing:0.000px;">0</div>
<div class="t" id="st_failed" style="left:1656.00px;top:553.32px;font-family:'Liberation Sans', sans-serif;font-size:29.50px;line-height:29.50px;font-weight:400;color:#3D3833;letter-spacing:0.350px;">Failed partitions</div>
<div class="t" id="st_882" style="left:2621.00px;top:499.27px;font-family:'Liberation Sans', sans-serif;font-size:38.50px;line-height:38.50px;font-weight:700;color:#231F1B;letter-spacing:2.350px;">882</div>
<div class="t" id="st_missing" style="left:2620.00px;top:553.32px;font-family:'Liberation Sans', sans-serif;font-size:29.50px;line-height:29.50px;font-weight:400;color:#3D3833;letter-spacing:0.394px;">Missing partitions</div>
<div class="t" id="pb_start" style="left:692.00px;top:708.05px;font-family:'Liberation Sans', sans-serif;font-size:27.00px;line-height:27.00px;font-weight:400;color:#78736E;letter-spacing:0.556px;">2020-01-01</div>
<div class="t" id="pb_end" style="left:3370.00px;top:708.05px;font-family:'Liberation Sans', sans-serif;font-size:27.00px;line-height:27.00px;font-weight:400;color:#78736E;letter-spacing:1.111px;">2022-07-30</div>
<div class="t" id="rd_title" style="left:707.00px;top:810.92px;font-family:'Liberation Sans', sans-serif;font-size:29.50px;line-height:29.50px;font-weight:400;color:#231F1B;-webkit-text-stroke:0.71px #231F1B;letter-spacing:0.409px;">Run duration</div>
<div class="t" id="bf_title" style="left:706.50px;top:1715.08px;font-family:'Liberation Sans', sans-serif;font-size:30.50px;line-height:30.50px;font-weight:400;color:#231F1B;-webkit-text-stroke:0.72px #231F1B;letter-spacing:0.333px;">Backfill History</div>
<div class="t" id="th_id" style="left:738.70px;top:1836.07px;font-family:'Liberation Sans', sans-serif;font-size:26.50px;line-height:26.50px;font-weight:400;color:#8A857F;letter-spacing:-0.270px;">Backfill Id</div>
<div class="t" id="th_created" style="left:956.00px;top:1836.07px;font-family:'Liberation Sans', sans-serif;font-size:26.50px;line-height:26.50px;font-weight:400;color:#8A857F;letter-spacing:-0.450px;">Created</div>
<div class="t" id="th_req" style="left:1434.70px;top:1836.07px;font-family:'Liberation Sans', sans-serif;font-size:26.50px;line-height:26.50px;font-weight:400;color:#8A857F;letter-spacing:-0.638px;">Requested</div>
<div class="t" id="th_bs" style="left:2226.00px;top:1836.07px;font-family:'Liberation Sans', sans-serif;font-size:26.50px;line-height:26.50px;font-weight:400;color:#8A857F;letter-spacing:-0.386px;">Backfill Status</div>
<div class="t" id="th_rs" style="left:2434.60px;top:1836.07px;font-family:'Liberation Sans', sans-serif;font-size:26.50px;line-height:26.50px;font-weight:400;color:#8A857F;letter-spacing:-0.733px;">Run Status</div>
<div class="t" id="td_id" style="left:740.50px;top:1917.07px;font-family:'Liberation Mono', monospace;font-size:26.00px;line-height:26.00px;font-weight:400;color:#1A1796;letter-spacing:0.500px;">jozrgsbh</div>
<div class="t" id="td_created" style="left:955.00px;top:1916.69px;font-family:'Liberation Mono', monospace;font-size:26.50px;line-height:26.50px;font-weight:400;color:#231F1B;letter-spacing:0.264px;">Jul 30, 5:12 PM</div>
<div class="t" id="td_60" style="left:1451.70px;top:1916.33px;font-family:'Liberation Sans', sans-serif;font-size:25.50px;line-height:25.50px;font-weight:400;color:#1A1796;letter-spacing:0.492px;">60 partitions</div>
<div class="t" id="td_s" style="left:1434.50px;top:2008.84px;font-family:'Liberation Mono', monospace;font-size:25.00px;line-height:25.00px;font-weight:400;color:#78736E;letter-spacing:-0.611px;">2020-01-01</div>
<div class="t" id="td_e" style="left:1844.50px;top:2008.84px;font-family:'Liberation Mono', monospace;font-size:25.00px;line-height:25.00px;font-weight:400;color:#78736E;letter-spacing:-0.611px;">2022-07-30</div>
<div class="t" id="td_inc" style="left:2245.00px;top:1916.33px;font-family:'Liberation Sans', sans-serif;font-size:25.50px;line-height:25.50px;font-weight:400;color:#3D3833;letter-spacing:0.222px;">Incomplete</div>
</body></html>
